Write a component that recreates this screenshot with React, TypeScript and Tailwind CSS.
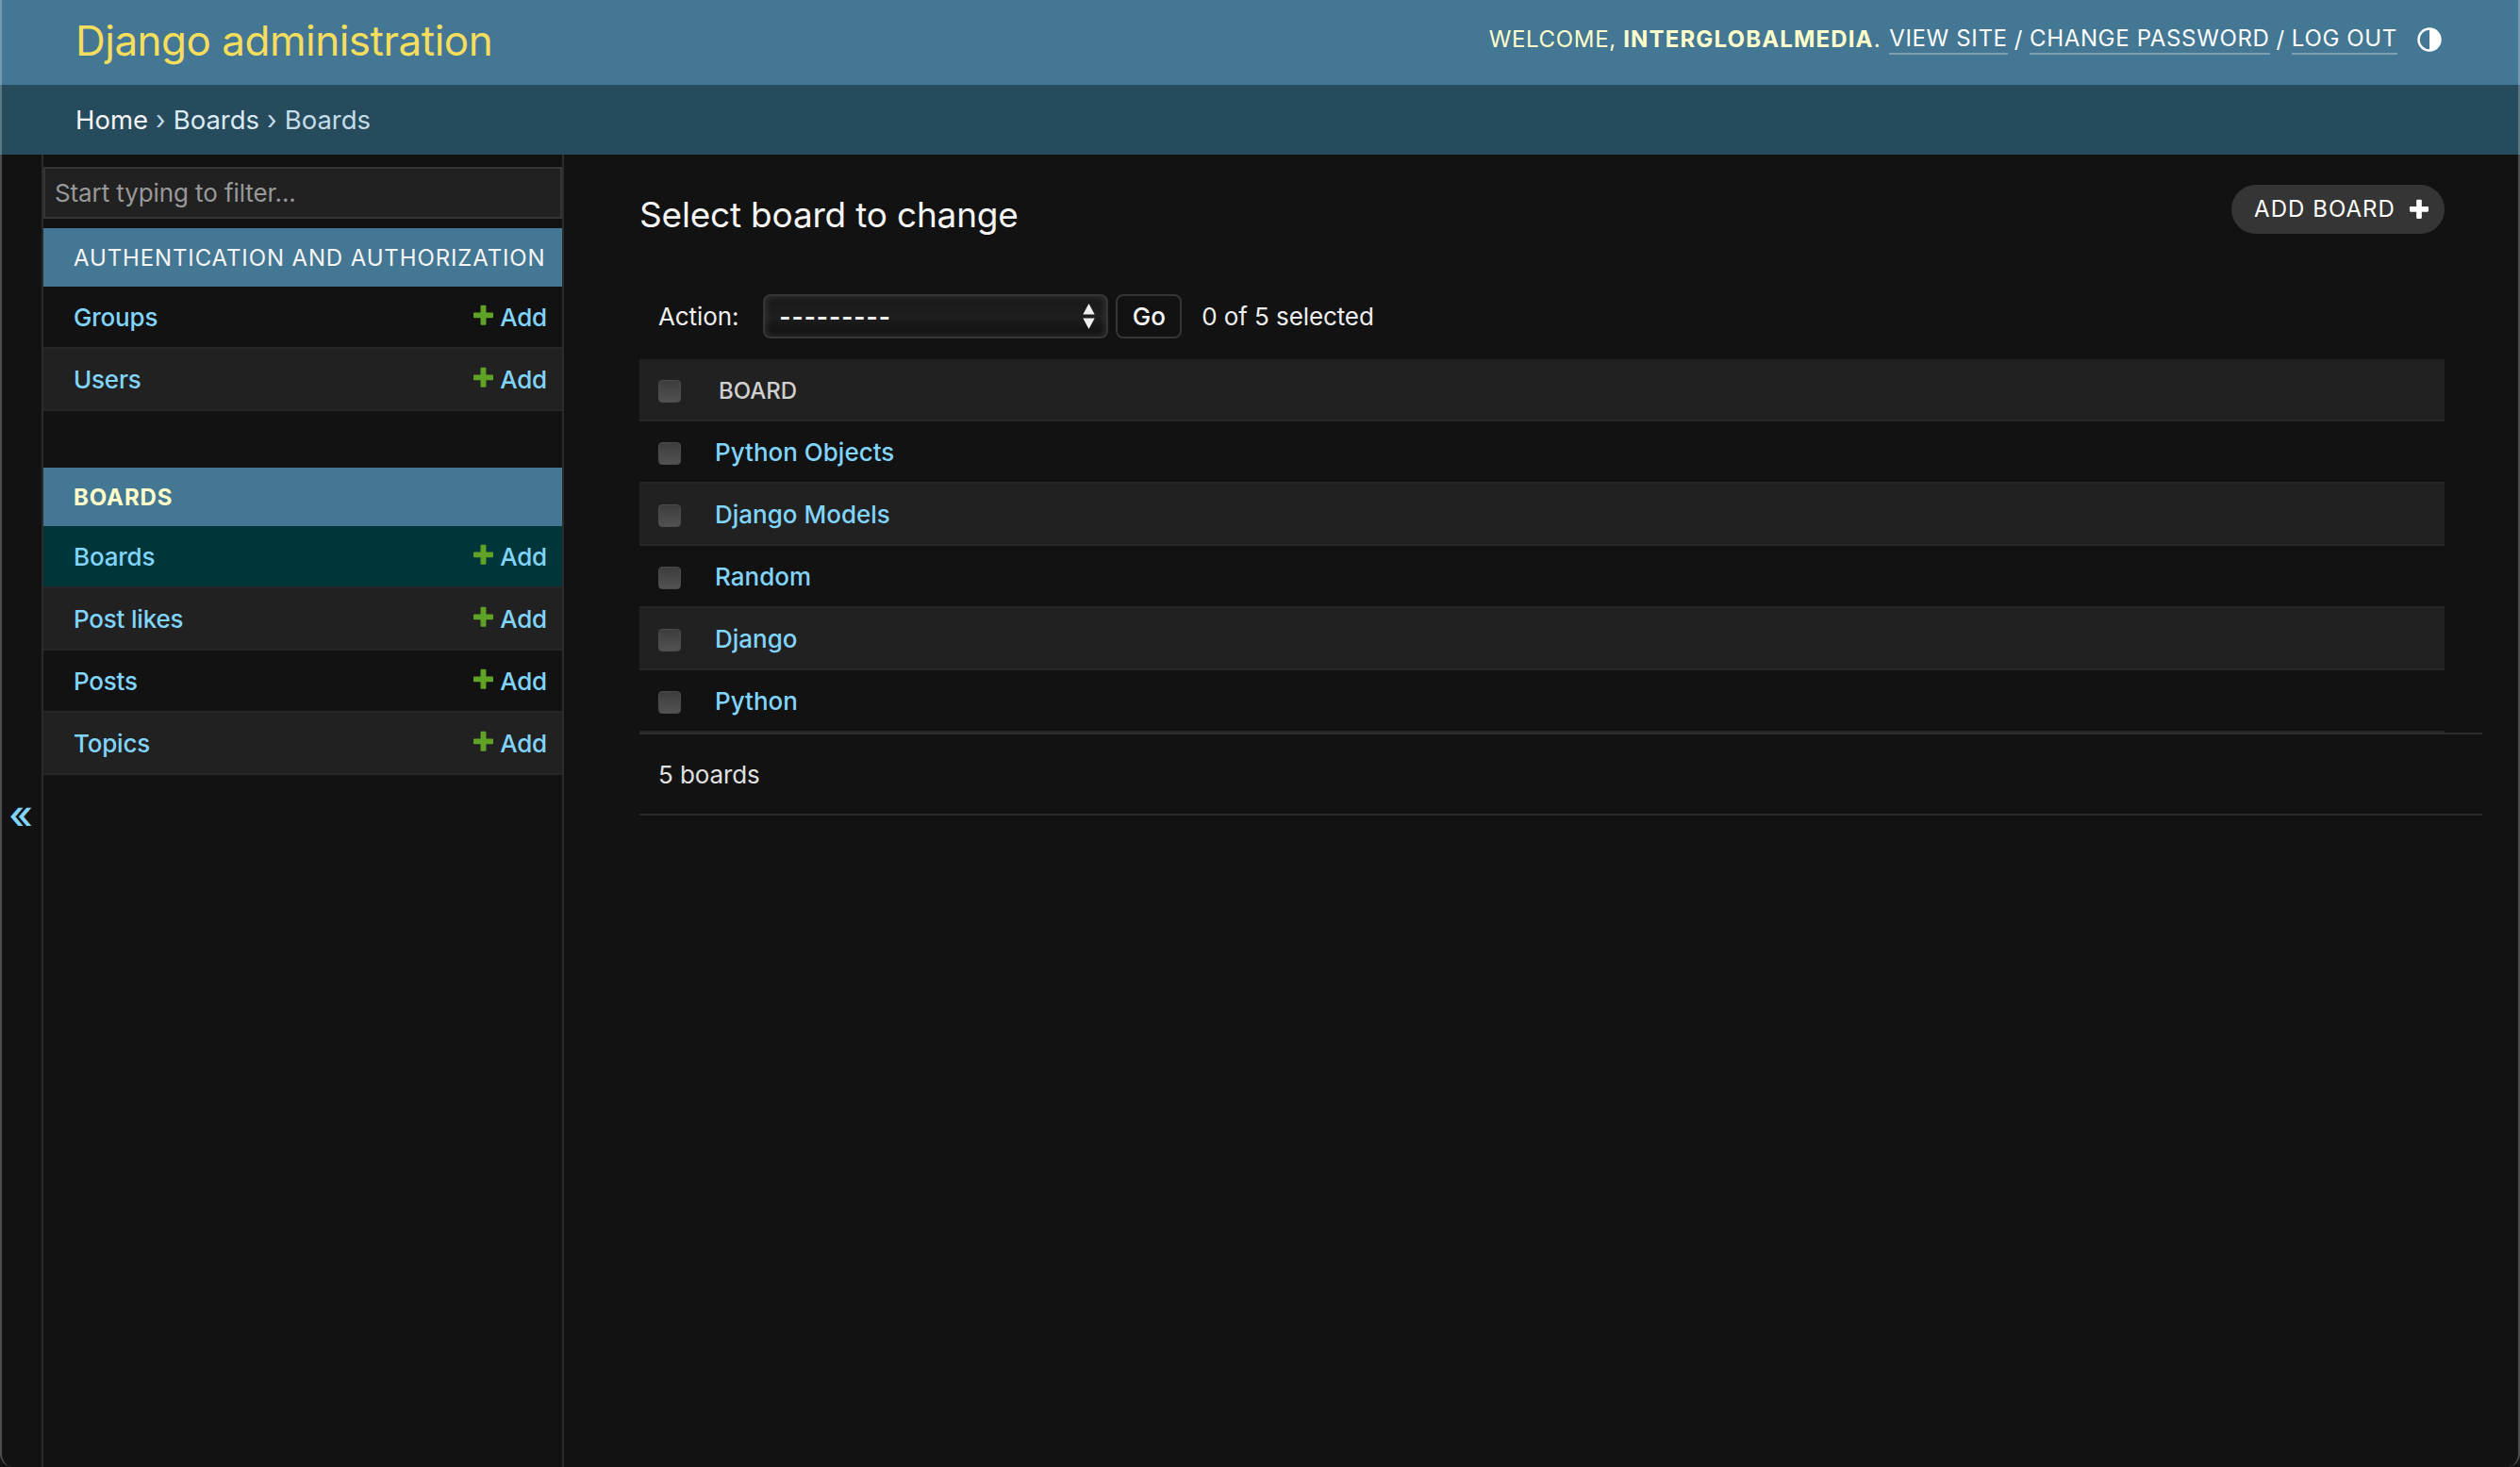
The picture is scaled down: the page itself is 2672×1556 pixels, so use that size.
const font = "font-['Inter','Roboto',sans-serif]"

const PlusIcon = ({ className }: { className: string }) => (
  <svg viewBox="0 0 14 14" className={className} fill="currentColor">
    <path d="M5.2 1.2c0-.4.3-.7.7-.7h2.2c.4 0 .7.3.7.7v3.9h3.9c.4 0 .7.3.7.7v2.2c0 .4-.3.7-.7.7H8.8v3.9c0 .4-.3.7-.7.7H5.9c-.4 0-.7-.3-.7-.7V8.7H1.3c-.4 0-.7-.3-.7-.7V5.8c0-.4.3-.7.7-.7h3.9z" />
  </svg>
)

const Checkbox = () => (
  <span className="block w-[24px] h-[24px] rounded-[4px] bg-linear-to-b from-[#3d3d3d] to-[#525252] border border-[#4c4c4c]" />
)

function SideRow({ name, alt, current }: { name: string; alt?: boolean; current?: boolean }) {
  return (
    <div
      className={`flex items-center justify-between h-[66px] pl-[32px] pr-[16px] border-b-2 border-[#262626] text-[26px] font-medium tracking-[-0.2px] text-[#81d4fa] ${
        current ? 'bg-[#00363a] border-[#00363a]' : alt ? 'bg-[#212121]' : 'bg-[#121212]'
      }`}
    >
      <a>{name}</a>
      <a className="flex items-center gap-[6px]">
        <PlusIcon className="w-[23px] h-[23px] text-[#5fa225] -mt-[3px]" />
        Add
      </a>
    </div>
  )
}

function ModuleHead({ title, active }: { title: string; active?: boolean }) {
  return (
    <div
      className={`flex items-center h-[62px] pl-[32px] pt-[1px] bg-[#447793] text-[24px] tracking-[0.87px] whitespace-nowrap ${
        active ? 'font-bold text-[#fffdc9]' : 'text-[#f5f5f5]'
      }`}
    >
      {title}
    </div>
  )
}

function BoardRow({ name, alt }: { name: string; alt?: boolean }) {
  return (
    <div
      className={`flex items-center h-[66px] pl-[20px] pt-[4px] border-b-2 border-[#262626] ${
        alt ? 'bg-[#212121]' : 'bg-[#121212]'
      }`}
    >
      <Checkbox />
      <a className="ml-[36px] -mt-[3px] text-[26px] font-medium text-[#81d4fa]">{name}</a>
    </div>
  )
}

export default function App() {
  return (
    <div className={`relative h-screen overflow-hidden flex flex-col bg-[#121212] text-[#eeeeee] ${font}`}>
      {/* header */}
      <header className="flex items-center justify-between h-[90px] shrink-0 bg-[#447793] pl-[80px] pr-[82px]">
        <h1 className="text-[44px] tracking-[-0.5px] text-[#f5dd5d] -mt-[4px]">Django administration</h1>
        <div className="flex items-center text-[24px] tracking-[0.65px] text-[#ffffcc] whitespace-nowrap -mt-[6px]">
          <span>
            WELCOME, <strong className="font-bold tracking-[1.15px]">INTERGLOBALMEDIA</strong>.
          </span>
          <a className="ml-[9px] text-white border-b-2 border-white/30 leading-[30px]">VIEW SITE</a>
          <span className="mx-[7px] text-white">/</span>
          <a className="text-white border-b-2 border-white/30 leading-[30px]">CHANGE PASSWORD</a>
          <span className="mx-[7px] text-white">/</span>
          <a className="text-white border-b-2 border-white/30 leading-[30px]">LOG OUT</a>
          <svg viewBox="0 0 28 28" className="ml-[20px] w-[28px] h-[28px] text-white" fill="none">
            <circle cx="14" cy="14" r="11.5" stroke="currentColor" strokeWidth="2.4" />
            <path d="M14 2.5a11.5 11.5 0 0 1 0 23z" fill="currentColor" />
          </svg>
        </div>
      </header>

      {/* breadcrumbs */}
      <div className="flex items-center h-[74px] shrink-0 bg-[#264b5d] pl-[80px] pt-[2px] text-[27.5px] text-[#c4dce8]">
        <a className="text-[#f5f5f5]">Home</a>
        <span className="mx-[8px]">›</span>
        <a className="text-[#dcebf3]">Boards</a>
        <span className="mx-[8px]">›</span>
        <span>Boards</span>
      </div>

      <div className="flex flex-1 min-h-0">
        {/* collapse toggle */}
        <div className="flex items-center justify-center w-[44px] shrink-0 border-r-2 border-[#2b2b2b] box-content">
          <span className="text-[42px] font-medium leading-none text-[#81d4fa] mt-[8px]">«</span>
        </div>

        {/* sidebar */}
        <aside className="w-[552px] shrink-0 border-r-2 border-[#2b2b2b] pt-[13px]">
          <div className="flex items-center h-[55px] px-[10px] bg-[#212121] border-2 border-[#353535] text-[26px] tracking-[-0.1px] text-[#999999]">
            Start typing to filter...
          </div>
          <div className="mt-[10px]">
            <ModuleHead title="AUTHENTICATION AND AUTHORIZATION" />
            <SideRow name="Groups" />
            <SideRow name="Users" alt />
          </div>
          <div className="mt-[60px]">
            <ModuleHead title="BOARDS" active />
            <SideRow name="Boards" current />
            <SideRow name="Post likes" alt />
            <SideRow name="Posts" />
            <SideRow name="Topics" alt />
          </div>
        </aside>

        {/* content */}
        <main className="flex-1 min-w-0 pl-[80px] pr-[40px]">
          <div className="pr-[40px] flex items-start justify-between h-[148px] pt-[32px]">
            <h2 className="text-[37px] tracking-[-0.2px] text-[#f5f5f5] leading-[64px]">Select board to change</h2>
            <a className="flex items-center gap-[14px] h-[52px] pl-[24px] pr-[16px] rounded-full bg-[#353535] text-[24px] tracking-[1.05px] text-white">
              ADD BOARD
              <PlusIcon className="w-[22px] h-[22px]" />
            </a>
          </div>

          <div className="flex items-center h-[47px] pl-[20px] text-[26px] tracking-[-0.1px]">
            <span>Action:</span>
            <div className="relative ml-[26px] w-[366px] h-[47px]">
              <select className="appearance-none w-full h-full pl-[15px] rounded-[8px] border-2 border-[#353535] bg-linear-to-b from-[#161616] via-[#1f1f1f] to-[#0e0e0e] shadow-[inset_0_0_8px_rgba(255,255,255,0.16)] text-[26px] font-bold tracking-[1px] text-[#eeeeee]">
                <option>---------</option>
              </select>
              <svg viewBox="0 0 12 26" className="absolute right-[14px] top-[10px] w-[13px] h-[27px] text-[#eeeeee]" fill="currentColor">
                <path d="M6 0l6 11H0zM6 26l-6-11h12z" />
              </svg>
            </div>
            <button className="ml-[8px] w-[70px] h-[47px] rounded-[8px] border-2 border-[#353535] bg-[#121212] text-[26px] font-medium text-[#f5f5f5]">
              Go
            </button>
            <span className="ml-[21px] -mt-[1px]">0 of 5 selected</span>
          </div>

          <div className="mt-[22px] mr-[40px]">
            <div className="flex items-center h-[66px] pl-[20px] pt-[4px] bg-[#212121] border-b-2 border-[#262626]">
              <Checkbox />
              <span className="ml-[40px] text-[24px] font-medium text-[#d0d0d0]">BOARD</span>
            </div>
            <BoardRow name="Python Objects" />
            <BoardRow name="Django Models" alt />
            <BoardRow name="Random" />
            <BoardRow name="Django" alt />
            <BoardRow name="Python" />
          </div>

          {/* paginator */}
          <div className="flex items-center h-[88px] pl-[20px] border-y-2 border-[#2b2b2b] text-[26px] tracking-[-0.1px] text-[#e0e0e0]">
            5 boards
          </div>
        </main>
      </div>

      {/* window edge */}
      <div className="absolute inset-0 pointer-events-none border-x-2 border-white/25 rounded-b-[14px]" />
    </div>
  )
}
